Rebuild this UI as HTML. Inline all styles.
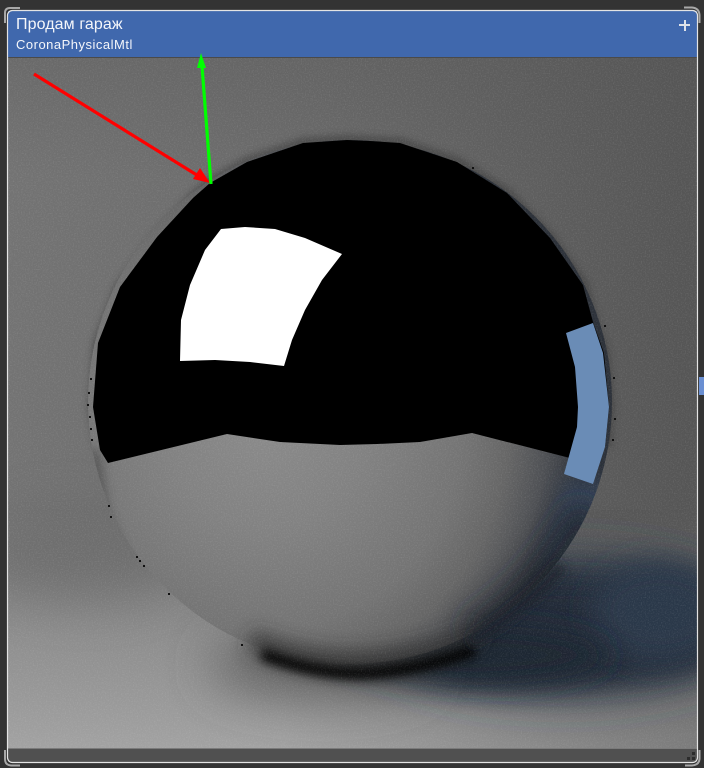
<!DOCTYPE html>
<html><head><meta charset="utf-8">
<style>
html,body{margin:0;padding:0;background:#333;width:704px;height:768px;overflow:hidden}
#s{position:absolute;left:0;top:0;display:block}
.t{position:absolute;color:#f4f6fa;font-family:"Liberation Sans",sans-serif;white-space:nowrap}
</style></head><body>
<svg id="s" width="704" height="768" viewBox="0 0 704 768" xmlns="http://www.w3.org/2000/svg">
<defs>
<linearGradient id="bgH" x1="0" x2="1" y1="0" y2="0"><stop offset="0" stop-color="#737373"/><stop offset=".45" stop-color="#6a6a6a"/><stop offset="1" stop-color="#555"/></linearGradient>
<linearGradient id="topD" x1="0" x2="0" y1="0" y2="1"><stop offset="0" stop-color="#555" stop-opacity=".3"/><stop offset="1" stop-color="#555" stop-opacity="0"/></linearGradient>
<linearGradient id="floor" x1="0" x2="0" y1="0" y2="1"><stop offset="0" stop-color="#9c9c9c" stop-opacity="0"/><stop offset=".55" stop-color="#9a9a9a" stop-opacity=".72"/><stop offset="1" stop-color="#a2a2a2"/></linearGradient>
<linearGradient id="floorR" x1="0" x2="1" y1="0" y2="0"><stop offset=".4" stop-color="#555" stop-opacity="0"/><stop offset="1" stop-color="#555" stop-opacity=".5"/></linearGradient>
<radialGradient id="ball" gradientUnits="userSpaceOnUse" cx="265" cy="430" r="320"><stop offset="0" stop-color="#8a8a8a"/><stop offset=".3" stop-color="#828282"/><stop offset=".62" stop-color="#747474"/><stop offset=".76" stop-color="#666"/><stop offset=".88" stop-color="#4e5054"/><stop offset="1" stop-color="#2c3139"/></radialGradient>
<filter id="b3" filterUnits="userSpaceOnUse" x="0" y="0" width="704" height="768"><feGaussianBlur stdDeviation="3.5"/></filter>
<filter id="b5" filterUnits="userSpaceOnUse" x="0" y="0" width="704" height="768"><feGaussianBlur stdDeviation="5"/></filter>
<filter id="b9" filterUnits="userSpaceOnUse" x="0" y="0" width="704" height="768"><feGaussianBlur stdDeviation="9"/></filter>
<filter id="b14" filterUnits="userSpaceOnUse" x="0" y="0" width="704" height="768"><feGaussianBlur stdDeviation="14"/></filter>
<filter id="b25" filterUnits="userSpaceOnUse" x="-100" y="0" width="904" height="868"><feGaussianBlur stdDeviation="24"/></filter>
<filter id="n" x="0" y="0" width="100%" height="100%"><feTurbulence type="fractalNoise" baseFrequency=".75" numOctaves="2" seed="4"/><feColorMatrix values="0 0 0 0 1  0 0 0 0 1  0 0 0 0 1  1.6 0 0 0 -.72"/></filter>
<clipPath id="img"><rect x="8" y="58" width="689" height="690"/></clipPath>
<clipPath id="sph"><circle cx="350" cy="402" r="262"/></clipPath>
</defs>

<rect width="704" height="768" fill="#333"/>
<g clip-path="url(#img)">
<rect x="8" y="58" width="689" height="690" fill="url(#bgH)"/>
<rect x="8" y="58" width="689" height="120" fill="url(#topD)"/>
<rect x="8" y="510" width="689" height="238" fill="url(#floor)"/>
<rect x="8" y="510" width="689" height="238" fill="url(#floorR)"/>
<ellipse cx="80" cy="555" rx="110" ry="45" fill="#666" opacity=".6" filter="url(#b25)"/>
<!-- floor shadows -->
<ellipse cx="560" cy="625" rx="200" ry="68" fill="#27313f" filter="url(#b25)"/>
<ellipse cx="550" cy="632" rx="190" ry="52" fill="#232c38" filter="url(#b14)"/>
<ellipse cx="660" cy="612" rx="70" ry="52" fill="#2c3848" filter="url(#b14)"/>
<ellipse cx="470" cy="655" rx="140" ry="30" fill="#1f2630" filter="url(#b14)"/>
<ellipse cx="320" cy="665" rx="110" ry="32" fill="#555" filter="url(#b25)" opacity=".8"/>
<!-- halo round upper half -->
<path d="M100 450 L93 407 L98 343 L120 287 L157 237 L193 198 L210 183 L247 162 L303 143 L347 140 L400 143 L457 162 L507 193 L550 238 L583 285 L593 322 L604 353 L609 407 L606 447" fill="none" stroke="#383838" stroke-width="11" filter="url(#b3)" opacity=".55"/>
<circle cx="350" cy="402" r="262" fill="url(#ball)"/>
<g clip-path="url(#sph)">
<path d="M565 480 L612 480 L590 570 L540 570Z" fill="#3a4b64" filter="url(#b9)" opacity=".7"/>
<path d="M99 450 L108 510 L128 560 L105 560 L88 450Z" fill="#4a4a4a" filter="url(#b5)" opacity=".75"/>
<path d="M470 640 Q540 600 590 510" fill="none" stroke="#1d232c" stroke-width="40" filter="url(#b14)" opacity=".85"/>
</g>
<!-- contact crescent over the ball's bottom edge -->
<path d="M250 640 Q300 662 350 662 Q420 662 480 632" fill="none" stroke="#2c2c2c" stroke-width="22" filter="url(#b9)" opacity=".75"/>
<path d="M262 654 Q320 676 370 673 Q420 670 475 650" fill="none" stroke="#050505" stroke-width="12" filter="url(#b5)"/>
<path d="M470 642 Q530 605 562 565" fill="none" stroke="#1b2029" stroke-width="13" filter="url(#b5)" opacity=".85"/>
<rect x="8" y="58" width="689" height="690" filter="url(#n)" opacity=".15"/>
<path d="M108 463 L100 450 L93 407 L98 343 L120 287 L157 237 L193 198 L210 183 L247 162 L303 143 L347 140 L370 141 L400 143 L457 162 L507 193 L550 238 L583 285 L593 322 L604 353 L609 407 L605 447 L597 470 L570 458 L472 433 L420 442 L377 444 L340 445 L280 442 L227 434Z" fill="#000"/>
<path d="M221 229 L245 227 L275 229 L305 238 L342 254 L322 280 L305 310 L292 340 L284 366 L250 362 L215 360 L180 361 L181 320 L190 285 L205 250Z" fill="#fff"/>
<path d="M566 333 L593 323 L603 353 L609 407 L605 447 L593 484 L564 474 L577 427 L578 407 L575 367Z" fill="#6a8cb6"/>
<g fill="#111"><rect x="90" y="378" width="2" height="2"/><rect x="88" y="392" width="2" height="2"/><rect x="87" y="404" width="2" height="2"/><rect x="89" y="416" width="2" height="2"/><rect x="90" y="428" width="2" height="2"/><rect x="91" y="439" width="2" height="2"/><rect x="136" y="556" width="2" height="2"/><rect x="139" y="560" width="2" height="2"/><rect x="143" y="565" width="2" height="2"/><rect x="168" y="593" width="2" height="2"/><rect x="241" y="644" width="2" height="2"/><rect x="472" y="167" width="2" height="2"/><rect x="604" y="325" width="2" height="2"/><rect x="613" y="377" width="2" height="2"/><rect x="614" y="418" width="2" height="2"/><rect x="612" y="439" width="2" height="2"/><rect x="108" y="505" width="2" height="2"/><rect x="110" y="516" width="2" height="2"/></g>
</g>

<rect x="8" y="11" width="689" height="47" fill="#4068ad"/>
<rect x="8" y="57" width="689" height="1" fill="#4a4a4a"/>
<rect x="8" y="748" width="689" height="14" fill="#505050"/>
<rect x="8" y="748" width="689" height="1" fill="#7a7a7a"/>
<line x1="34" y1="74" x2="200" y2="177" stroke="#f00" stroke-width="3.2"/>
<path d="M210 183 L193 179 L200 168Z" fill="#f00"/>
<line x1="211" y1="184" x2="202" y2="66" stroke="#0f0" stroke-width="3.2"/>
<path d="M201 53 L206 68 L197 68Z" fill="#0f0"/>
<rect x="7.5" y="10.5" width="690" height="752" rx="5" fill="none" stroke="#e4e4e4" stroke-width="1.2"/>
<g fill="none" stroke="#a8a8a8" stroke-width="2">
<path d="M5 23 V13 Q5 8 10 8 H20"/>
<path d="M684 7.5 H692 Q699 8 699.5 15 V23"/>
<path d="M5 750 V759 Q5 765 11 765.500 H20"/>
<path d="M685 765.500 H692 Q699 765 699.500 759 V750"/>
</g>
<rect x="699" y="377" width="5" height="18" fill="#6a8fd2"/>
<g fill="#dfe3ea"><rect x="679" y="24" width="11" height="2"/><rect x="684" y="20" width="2" height="11"/></g>
<g fill="#2c2c2c"><rect x="692" y="752" width="3" height="3"/><rect x="692" y="757" width="3" height="3"/><rect x="687" y="757" width="3" height="3"/></g>
</svg>
<div class="t" style="left:16px;top:15px;font-size:16px;line-height:19px;letter-spacing:.1px">Продам гараж</div>
<div class="t" style="left:16px;top:37px;font-size:13px;line-height:16px;letter-spacing:.5px">CoronaPhysicalMtl</div>
</body></html>
